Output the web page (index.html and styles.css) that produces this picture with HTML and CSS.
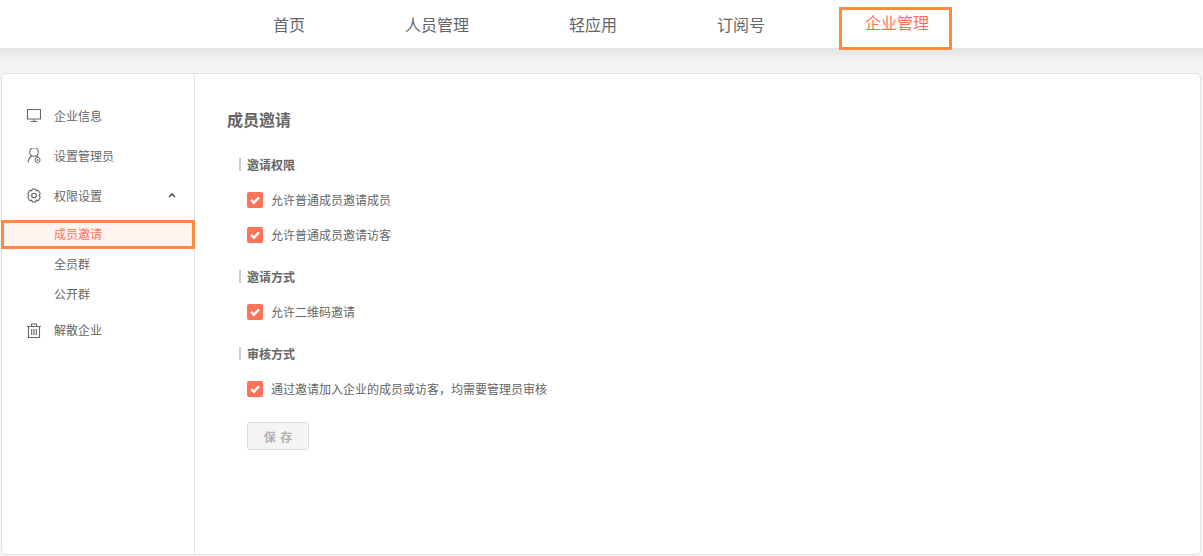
FILE: index.html
```html
<!DOCTYPE html>
<html lang="zh">
<head>
<meta charset="utf-8">
<title>成员邀请</title>
<link rel="stylesheet" href="styles.css">
</head>
<body>
<header class="topbar">
  <nav class="nav">
    <a class="nav-item">首页</a>
    <a class="nav-item">人员管理</a>
    <a class="nav-item">轻应用</a>
    <a class="nav-item">订阅号</a>
    <a class="nav-item nav-active">企业管理</a>
  </nav>
</header>
<div class="band">
  <div class="card">
    <aside class="side">
      <div class="side-item">
        <svg class="ico" viewBox="0 0 15 15"><path d="M1.500 1.500h13v9.500h-13zM8 11v2.500M4.500 13.500h7" fill="none" stroke="#666" stroke-width="1.100"/></svg>
        <span>企业信息</span>
      </div>
      <div class="side-item">
        <svg class="ico" viewBox="0 0 15 15"><circle cx="8" cy="4" r="4.300" fill="none" stroke="#666" stroke-width="1.100"/><path d="M2 14.500c.2-3 1.500-5 3.800-6.500M10.500 8l1.500 1.500" fill="none" stroke="#666" stroke-width="1.100"/><circle cx="11.500" cy="12" r="2.600" fill="none" stroke="#666" stroke-width="1"/><circle cx="11.500" cy="12" r=".9" fill="#666"/></svg>
        <span>设置管理员</span>
      </div>
      <div class="side-item">
        <svg class="ico" viewBox="0 0 15 15"><path d="M5.800 1h3.400l.6 1.900 1.900-.6 2.100 3.400L12.500 7.500l1.300 1.800-2.100 3.400-1.900-.6-.6 1.900H5.800l-.6-1.900-1.900.6L1.200 9.300 2.500 7.500 1.200 5.700l2.100-3.400 1.900.6z" fill="none" stroke="#666" stroke-width="1.100" stroke-linejoin="round" transform="translate(.5 0)"/><circle cx="8" cy="7.500" r="2.300" fill="none" stroke="#666" stroke-width="1.100"/></svg>
        <span class="side-label">权限设置</span>
        <svg class="caret" viewBox="0 0 8 6"><path d="M1 5l3-3 3 3" fill="none" stroke="#555" stroke-width="1.700"/></svg>
      </div>
      <div class="sub-list">
        <div class="sub-item sub-active">成员邀请</div>
        <div class="sub-item">全员群</div>
        <div class="sub-item">公开群</div>
      </div>
      <div class="side-item side-last">
        <svg class="ico" viewBox="0 0 15 15"><path d="M2.500 3.500h11v11h-11zM1 3.500h14M5.500 3.500V1h5v2.500M5.700 6v6M8 6v6M10.300 6v6" fill="none" stroke="#666" stroke-width="1.100"/></svg>
        <span class="side-last-label">解散企业</span>
      </div>
    </aside>
    <main class="main">
      <h1 class="title">成员邀请</h1>

      <h2 class="section">邀请权限</h2>
      <label class="check"><span class="box"><svg viewBox="0 0 16 16"><path d="M4 8l3 2.700L12 5.300" fill="none" stroke="#fff" stroke-width="2.400"/></svg></span>允许普通成员邀请成员</label>
      <label class="check"><span class="box"><svg viewBox="0 0 16 16"><path d="M4 8l3 2.700L12 5.300" fill="none" stroke="#fff" stroke-width="2.400"/></svg></span>允许普通成员邀请访客</label>

      <h2 class="section">邀请方式</h2>
      <label class="check"><span class="box"><svg viewBox="0 0 16 16"><path d="M4 8l3 2.700L12 5.300" fill="none" stroke="#fff" stroke-width="2.400"/></svg></span>允许二维码邀请</label>

      <h2 class="section">审核方式</h2>
      <label class="check"><span class="box"><svg viewBox="0 0 16 16"><path d="M4 8l3 2.700L12 5.300" fill="none" stroke="#fff" stroke-width="2.400"/></svg></span>通过邀请加入企业的成员或访客，均需要管理员审核</label>

      <button class="save" type="button">保 存</button>
    </main>
  </div>
</div>
</body>
</html>
```
FILE: styles.css
```css
* { box-sizing: border-box; }
html, body { margin: 0; padding: 0; }
body {
  width: 1203px;
  height: 556px;
  overflow: hidden;
  background: #fff;
  font-family: "Noto Sans CJK SC", "Liberation Sans", sans-serif;
  color: #666;
}
.topbar { height: 48px; background: #fff; }
.nav {
  display: flex;
  gap: 100px;
  padding-left: 273px;
}
.nav-item {
  font-size: 16px;
  line-height: 48px;
  color: #666;
}
.nav-active {
  position: relative;
  line-height: 44px;
  color: #ff7259;
}
.nav-active::after {
  content: "";
  position: absolute;
  left: -26px;
  right: -23px;
  top: 7px;
  height: 37px;
  border: 3px solid #fd8a3f;
}
.band {
  height: 508px;
  padding: 25px 2px 1px 1px;
  background: linear-gradient(#e4e4e4 0, #f3f3f3 14px, #f6f6f6 25px);
}
.card {
  display: flex;
  height: 482px;
  background: #fff;
  border: 1px solid #e2e2e2;
  border-radius: 5px;
}
.side {
  width: 193px;
  padding-top: 21px;
  border-right: 1px solid #e4e4e4;
  font-size: 12px;
}
.side-item {
  display: flex;
  align-items: center;
  height: 40px;
  padding-left: 24px;
  color: #666;
}
.ico { width: 15px; height: 15px; margin-right: 13px; flex: none; }
.side-label { flex: 1; }
.caret { width: 8px; height: 6px; margin-right: 18px; }
.sub-list { padding-top: 5px; }
.sub-item {
  height: 30px;
  padding-left: 52px;
  line-height: 30px;
  color: #666;
}
.sub-active {
  height: 29px;
  margin: 0 -1px;
  padding-left: 50px;
  line-height: 21px;
  color: #ff7259;
  background: #fff4f0;
  border: 3px solid #fd8a3f;
}
.side-last { height: 42px; }
.side-last-label { margin-bottom: 2px; }
.main { flex: 1; padding: 25px 0 0 32px; }
.title {
  margin: 0;
  font-size: 16px;
  line-height: 40px;
  font-weight: 700;
  color: #666;
}
.section {
  margin: 19px 0 0 12px;
  padding-left: 6px;
  border-left: 2px solid #ccc;
  height: 13px;
  font-size: 12px;
  line-height: 13px;
  font-weight: 700;
  color: #666;
}
.check {
  display: flex;
  align-items: center;
  height: 35px;
  margin-left: 20px;
  font-size: 12px;
  color: #666;
}
.section + .check { margin-top: 11px; }
.check + .section { margin-top: 18px; }
.box {
  display: block;
  width: 16px;
  height: 16px;
  margin-right: 8px;
  background: #ff7259;
  border-radius: 2px;
}
.box svg { display: block; width: 16px; height: 16px; }
.save {
  display: block;
  width: 62px;
  height: 28px;
  margin: 16px 0 0 20px;
  padding: 0;
  background: #f5f5f5;
  border: 1px solid #ddd;
  border-radius: 3px;
  font: 700 12px "Noto Sans CJK SC", "Liberation Sans", sans-serif;
  word-spacing: 2px;
  color: #b0b0b0;
}
```
